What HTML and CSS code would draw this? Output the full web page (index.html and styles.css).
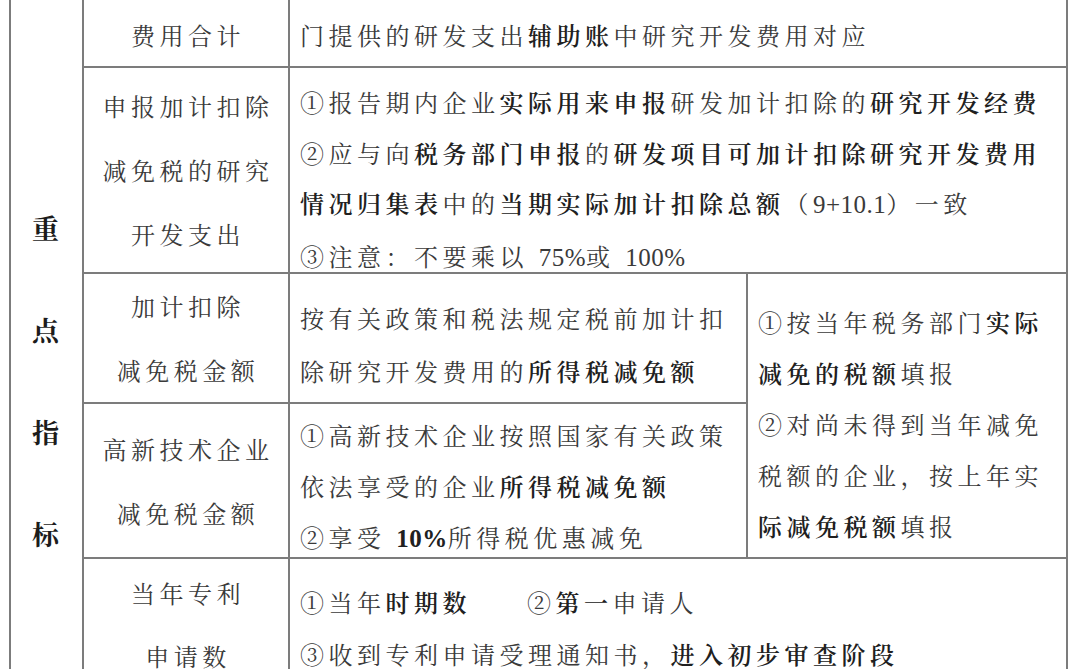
FILE: index.html
```html
<!DOCTYPE html>
<html lang="zh-CN">
<head>
<meta charset="utf-8">
<title>重点指标</title>
<link rel="stylesheet" href="styles.css">
</head>
<body>
<div class="sheet">
  <div class="cell side"><span>重</span><span>点</span><span>指</span><span>标</span></div>

  <div class="cell label r1">费用合计</div>
  <div class="cell body r1 wide">门提供的研发支出<b>辅助账</b>中研究开发费用对应</div>

  <div class="cell label r2"><div>申报加计扣除</div><div>减免税的研究</div><div>开发支出</div></div>
  <div class="cell body r2 wide"><div class="fix">
    <div>①报告期内企业<b>实际用来申报</b>研发加计扣除的<b>研究开发经费</b></div>
    <div>②应与向<b>税务部门申报</b>的<b>研发项目可加计扣除研究开发费用</b></div>
    <div><b>情况归集表</b>中的<b>当期实际加计扣除总额</b>（<span class="lat">9+10.1</span>）一致</div>
    <div>③注意：不要乘以 <span class="lat">75%</span>或 <span class="lat">100%</span></div>
  </div></div>

  <div class="cell label r3"><div>加计扣除</div><div>减免税金额</div></div>
  <div class="cell body r3">
    <div>按有关政策和税法规定税前加计扣</div>
    <div>除研究开发费用的<b>所得税减免额</b></div>
  </div>
  <div class="cell body rr">
    <div>①按当年税务部门<b>实际</b></div>
    <div><b>减免的税额</b>填报</div>
    <div>②对尚未得到当年减免</div>
    <div>税额的企业，按上年实</div>
    <div><b>际减免税额</b>填报</div>
  </div>

  <div class="cell label r4"><div>高新技术企业</div><div>减免税金额</div></div>
  <div class="cell body r4">
    <div>①高新技术企业按照国家有关政策</div>
    <div>依法享受的企业<b>所得税减免额</b></div>
    <div>②享受 <b class="lat">10%</b>所得税优惠减免</div>
  </div>

  <div class="cell label r5"><div>当年专利</div><div>申请数</div></div>
  <div class="cell body r5 wide">
    <div>①当年<b>时期数</b><span class="gap"></span>②<b>第一</b>申请人</div>
    <div>③收到专利申请受理通知书，<b>进入初步审查阶段</b></div>
  </div>
</div>
</body>
</html>
```

FILE: styles.css
```css
html, body {
  margin: 0;
  padding: 0;
  background: #ffffff;
  overflow: hidden;
}

body {
  font-family: "Noto Serif CJK SC", "Noto Sans CJK SC", serif;
  color: #3a3a3a;
  font-size: 24px;
}

.sheet {
  display: grid;
  grid-template-columns: 73px 206px 458px 320px;
  grid-template-rows: 70px 206px 130px 155px 130px;
  margin: -2px 0 0 9px;
  width: 1059px;
  border-left: 2px solid #7c7c7c;
  box-sizing: border-box;
}

.cell {
  box-sizing: border-box;
  border-right: 2px solid #7c7c7c;
  border-bottom: 2px solid #7c7c7c;
  letter-spacing: 4.5px;
  white-space: nowrap;
}

b {
  font-weight: 600;
  color: #202020;
}

.lat {
  font-family: "Liberation Serif", "Noto Serif CJK SC", "Noto Sans CJK SC", serif;
  font-size: 25px;
  letter-spacing: 0.5px;
}

.side {
  grid-column: 1;
  grid-row: 1 / 6;
  display: flex;
  flex-direction: column;
  align-items: center;
  padding-top: 179px;
  padding-right: 2px;
  font-size: 27px;
  font-weight: 700;
  color: #1c1c1c;
  line-height: 102px;
  letter-spacing: 0;
}

.label {
  grid-column: 2;
  display: flex;
  flex-direction: column;
  justify-content: center;
  align-items: center;
  line-height: 64px;
  padding-left: 4px;
}

.label.r1 {
  line-height: 51px;
  justify-content: flex-start;
  padding-top: 11px;
}

.label.r5 {
  justify-content: flex-start;
  padding-top: 2px;
  line-height: 63px;
}

.body {
  grid-column: 3;
  padding-left: 10px;
  line-height: 51px;
}

.wide {
  grid-column: 3 / 5;
}

.r1 { grid-row: 1; }
.r2 { grid-row: 2; }
.r3 { grid-row: 3; }
.r4 { grid-row: 4; }
.r5 { grid-row: 5; }

.body.r1 { padding-top: 11px; }

.body.r2 { padding-top: 9px; }
.body.r2 .fix {
  height: 180px;
  line-height: 50.5px;
}

.body.r3 { padding-top: 17px; line-height: 53px; }

.body.rr {
  grid-column: 4;
  grid-row: 3 / 5;
  padding-top: 22px;
  line-height: 51px;
}

.body.r4 { padding-top: 5px; line-height: 51px; }

.body.r5 { padding-top: 17px; line-height: 52px; }

.gap {
  display: inline-block;
  width: 56px;
}
```
